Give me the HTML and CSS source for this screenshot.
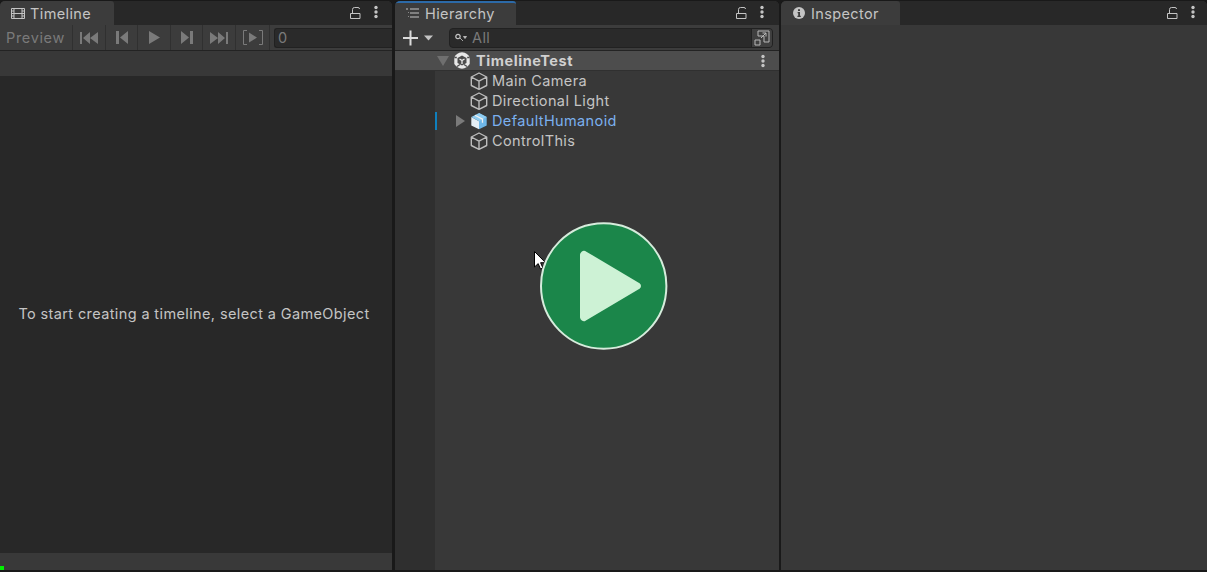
FILE: index.html
```html
<!DOCTYPE html>
<html lang="en">
<head>
<meta charset="utf-8">
<title>Unity Timeline</title>
<link rel="stylesheet" href="styles.css">
</head>
<body>
<svg class="defs" width="0" height="0">
  <defs>
    <symbol id="lock" viewBox="0 0 12 13"><path d="M1.500 7.500h9.500v5H1.500zM3.500 7.500V3.500q0-2 2-2H9q1.500 0 1.500 1.500" fill="none" stroke="#c4c4c4" stroke-width="1"/></symbol>
    <symbol id="dots" viewBox="0 0 4 14"><circle cx="2" cy="2.500" r="1.700" fill="#c4c4c4"/><circle cx="2" cy="7" r="1.700" fill="#c4c4c4"/><circle cx="2" cy="11.500" r="1.700" fill="#c4c4c4"/></symbol>
    <symbol id="cube" viewBox="0 0 18 18"><path d="M9 1 16.700 5v8.500L9 17.300 1.300 13.500V5zM1.300 5 9 9.200 16.700 5M9 9.200v8" fill="none" stroke="#bdbdbd" stroke-width="1.400" stroke-linejoin="round"/></symbol>
  </defs>
</svg>
<main class="workspace">
  <section class="panel timeline">
    <header class="tabbar">
      <div class="tab tab-timeline">
        <svg class="tab-icon" width="14" height="13" viewBox="0 0 14 13"><path d="M.5 1.500h13v10H.5zM3 1.500v10M11 1.500v10M3 6.500h8M.5 4h2.500M.5 6.500h2.500M.5 9h2.500M11 4h2.500M11 6.500h2.500M11 9h2.500" fill="none" stroke="#c4c4c4"/></svg>
        <span>Timeline</span>
      </div>
      <div class="tab-actions">
        <svg class="lock" width="12" height="13"><use href="#lock"/></svg>
        <svg class="dots" width="4" height="14"><use href="#dots"/></svg>
      </div>
    </header>
    <div class="transport">
      <div class="tbtn preview">Preview</div>
      <div class="tbtn t-first"><svg width="18" height="12" viewBox="0 0 18 12"><path d="M0 0h2v12H0zM10 0v12L3 6zM18 0v12l-8-6z"/></svg></div>
      <div class="tbtn t-prev"><svg width="12" height="13" viewBox="0 0 12 13"><path d="M0 0h3v13H0zM12 0v13L4 6.500z"/></svg></div>
      <div class="tbtn t-play"><svg width="11" height="13" viewBox="0 0 11 13"><path d="M0 0l11 6.500L0 13z"/></svg></div>
      <div class="tbtn t-next"><svg width="12" height="13" viewBox="0 0 12 13"><path d="M0 0v13l8-6.500zM9 0h3v13H9z"/></svg></div>
      <div class="tbtn t-last"><svg width="18" height="12" viewBox="0 0 18 12"><path d="M0 0v12l8-6zM8 0v12l7-6zM16 0h2v12h-2z"/></svg></div>
      <div class="tbtn t-loop"><svg width="20" height="15" viewBox="0 0 20 15"><path d="M4 .5H.5v14H4M16 .5h3.500v14H16" fill="none" stroke="#7a7a7a"/><path d="M6 2.500l8 5-8 5z"/></svg></div>
      <div class="frame-field">0</div>
    </div>
    <div class="timeline-ruler"></div>
    <div class="timeline-body"><p>To start creating a timeline, select a GameObject</p></div>
    <div class="timeline-foot"></div>
  </section>

  <section class="panel hierarchy">
    <header class="tabbar">
      <div class="tab tab-hierarchy">
        <svg class="tab-icon" width="13" height="10" viewBox="0 0 13 10"><path d="M0 1h2M4 1h9M4 5h9M4 9h9" stroke="#c4c4c4" fill="none" stroke-width="1.200"/><path d="M2 4.500h1M2 8.500h1" stroke="#888"/></svg>
        <span>Hierarchy</span>
      </div>
      <div class="tab-actions">
        <svg class="lock" width="12" height="13"><use href="#lock"/></svg>
        <svg class="dots" width="4" height="14"><use href="#dots"/></svg>
      </div>
    </header>
    <div class="search-bar">
      <svg class="add" width="30" height="16" viewBox="0 0 30 16"><path d="M7.500 .5v15M0 8h15" stroke="#dcdcdc" stroke-width="2"/><path d="M21 5.500h9L25.500 10.500z" fill="#c4c4c4"/></svg>
      <div class="search-field">
        <svg width="12" height="9" viewBox="0 0 12 9"><circle cx="3" cy="3.500" r="2.200" fill="none" stroke="#c4c4c4" stroke-width="1.200"/><path d="M5 5l3 3M8.500 3.500h3L10 5.500z" stroke="#c4c4c4" fill="#c4c4c4" stroke-width=".8"/></svg>
        <span>All</span>
        <div class="search-pop">
          <svg width="16" height="16" viewBox="0 0 16 16"><path d="M4 1h11v11H10V6H4z" fill="none" stroke="#b8b8b8"/><path d="M1 10h5v5H1zM7 8l5-5M8.500 3H12v3.500" fill="none" stroke="#b8b8b8"/></svg>
        </div>
      </div>
    </div>
    <div class="tree">
      <div class="scene-row">
        <svg class="fold" width="12" height="10" viewBox="0 0 12 10"><path d="M0 0h12L6 10z"/></svg>
        <svg class="unity" width="16" height="17" viewBox="0 0 16 17"><path d="M8 .3Q14 1 15.700 5.500V12Q13 16 8 16.700 3 16 .3 12V5.500Q2 1 8 .3z" fill="#e8e8e8"/><path d="M.3 5.500h2.500M15.700 5.500h-2.500M3 14.500l3-2M13 14.500l-3-2" stroke="#4d4d4d" stroke-width="1.300"/><path d="M3.500 6 8 3.500 12.500 6v5L8 13.500 3.500 11z" fill="#4d4d4d"/><path d="M5.500 7 8 8.500 10.500 7M8 8.500V12" stroke="#e8e8e8" stroke-width="1.300" fill="none"/></svg>
        <span class="scene-name">TimelineTest</span>
        <svg class="dots scene-dots" width="4" height="14"><use href="#dots"/></svg>
      </div>
      <div class="tree-row"><svg class="cube" width="18" height="18"><use href="#cube"/></svg><span>Main Camera</span></div>
      <div class="tree-row"><svg class="cube" width="18" height="18"><use href="#cube"/></svg><span>Directional Light</span></div>
      <div class="tree-row prefab">
        <i class="override-bar"></i>
        <svg class="expand" width="9" height="12" viewBox="0 0 9 12"><path d="M0 0l9 6-9 6z"/></svg>
        <svg class="cube" width="18" height="18" viewBox="0 0 18 18"><path d="M9 1 16.700 5v8.500L9 17.300z" fill="#6fb7e8"/><path d="M1.300 5 9 9.200v8L1.300 13.500z" fill="#e4eef5"/><path d="M1.300 5 9 1 16.700 5 9 9.200z" fill="#8fcdf2"/><path d="M5 3.200l7.500 4v3.500" stroke="#f0f0f0" stroke-width="1.300" fill="none"/></svg>
        <span>DefaultHumanoid</span>
      </div>
      <div class="tree-row"><svg class="cube" width="18" height="18"><use href="#cube"/></svg><span>ControlThis</span></div>
    </div>
  </section>

  <section class="panel inspector">
    <header class="tabbar">
      <div class="tab tab-inspector">
        <svg class="tab-icon" width="12" height="12" viewBox="0 0 12 12"><circle cx="6" cy="6" r="6" fill="#c4c4c4"/><path d="M5 2.200h2v1.800H5zM4.600 5h2.400v3.800h.8V10H4.400V8.800h.8V6.200h-.6z" fill="#3c3c3c"/></svg>
        <span>Inspector</span>
      </div>
      <div class="tab-actions">
        <svg class="lock" width="12" height="13"><use href="#lock"/></svg>
        <svg class="dots" width="4" height="14"><use href="#dots"/></svg>
      </div>
    </header>
    <div class="inspector-body"></div>
  </section>
</main>
<i class="progress"></i>
<svg class="cursor" width="12" height="19" viewBox="0 0 12 19"><path d="M.5.500v15.500l3.700-3.400 2.300 5.400 2.400-1-2.300-5.300h5z" fill="#fff" stroke="#000" stroke-width="1"/></svg>
<svg class="play-overlay" width="128" height="128" viewBox="0 0 128 128">
  <circle cx="63.700" cy="64" r="62.700" fill="#1b864a" stroke="#d6ecdc" stroke-width="2"/>
  <path d="M45 30 99 62a2.500 2.500 0 0 1 0 4L45 98a3 3 0 0 1-4-2.500V33a3 3 0 0 1 4-3z" fill="#cdf2d5" stroke="#cdf2d5" stroke-width="2" stroke-linejoin="round"/>
</svg>
</body>
</html>
```
FILE: styles.css
```css
* { box-sizing: border-box; }
html, body { margin: 0; height: 100%; overflow: hidden; }
body {
  background: #191919;
  font-family: Inter, "Noto Sans", sans-serif;
  font-size: 14.5px;
  letter-spacing: .38px;
  color: #c4c4c4;
  position: relative;
}
.defs { position: absolute; }
.workspace {
  display: flex;
  height: 570px;
  padding-top: 1px;
}
.panel {
  display: flex;
  flex-direction: column;
  background: #383838;
  min-width: 0;
  overflow: hidden;
  border-radius: 5px 5px 0 0;
}
.timeline { width: 392px; margin-right: 3px; }
.hierarchy { width: 384px; margin-right: 2px; }
.inspector { flex: 1; }

.tabbar {
  display: flex;
  justify-content: space-between;
  height: 24px;
  flex: none;
  background: #282828;
}
.tab {
  display: flex;
  align-items: center;
  height: 24px;
  background: #3c3c3c;
  border-radius: 3px 3px 0 0;
}
.tab-timeline { width: 114px; padding-left: 11px; gap: 5px; }
.tab-hierarchy { width: 121px; padding-left: 11px; padding-bottom: 2px; gap: 6px; border-top: 2px solid #2c6aa8; }
.tab-inspector { width: 119px; padding-left: 12px; gap: 6px; }
.tab-actions {
  display: flex;
  align-items: center;
  gap: 13px;
  padding-right: 14px;
  padding-bottom: 2px;
}
.hierarchy .tab-actions { padding-right: 15px; }
.inspector .tab-actions { padding-right: 12px; }

.transport {
  display: flex;
  height: 26px;
  flex: none;
  background: #3c3c3c;
  border-bottom: 1px solid #232323;
}
.tbtn {
  display: flex;
  align-items: center;
  justify-content: center;
  border-right: 1px solid #303030;
  fill: #7a7a7a;
  flex: none;
  color: #7a7a7a;
}
.preview { width: 73px; justify-content: flex-start; padding-left: 6px; letter-spacing: .66px; }
.t-first { width: 33px; }
.t-prev { width: 32px; }
.t-play { width: 33px; }
.t-next { width: 32px; }
.t-last { width: 33px; }
.t-loop { width: 34px; }
.frame-field {
  flex: 1;
  margin: 3px 0 2px 4px;
  padding-left: 3px;
  background: #2a2a2a;
  border: 1px solid #212121;
  border-right: 0;
  border-radius: 3px 0 0 3px;
  color: #7a7a7a;
  line-height: 18px;
}
.timeline-ruler { height: 25px; flex: none; background: #383838; }
.timeline-body {
  flex: 1;
  display: flex;
  align-items: center;
  justify-content: center;
  background: #282828;
}
.timeline-body p { margin: 0 0 2px; padding-right: 4px; }
.timeline-foot { height: 17px; flex: none; background: #393939; }

.search-bar {
  display: flex;
  align-items: center;
  height: 26px;
  flex: none;
  background: #3c3c3c;
  border-bottom: 1px solid #232323;
  padding-left: 8px;
  gap: 16px;
}
.add { flex: none; }
.search-field {
  display: flex;
  align-items: center;
  flex: 1;
  height: 20px;
  margin-right: 6px;
  padding-left: 5px;
  gap: 5px;
  background: #2a2a2a;
  border: 1px solid #212121;
  border-radius: 4px;
  color: #7a7a7a;
}
.search-field span { flex: 1; }
.search-pop {
  display: flex;
  align-items: center;
  justify-content: center;
  width: 21px;
  height: 18px;
  background: #3f3f3f;
  border-left: 1px solid #212121;
  border-radius: 0 3px 3px 0;
}
.tree {
  flex: 1;
  background: linear-gradient(to right, #2f2f2f 40px, #383838 40px);
}
.scene-row {
  display: flex;
  align-items: center;
  height: 19px;
  background: #4d4d4d;
  padding-left: 42px;
  border-bottom: 1px solid #303030;
  position: relative;
  box-sizing: content-box;
}
.fold { fill: #6f6f6f; margin-right: 5px; flex: none; }
.unity { margin-right: 6px; flex: none; }
.scene-name { font-weight: 700; color: #d0d0d0; flex: 1; letter-spacing: .55px; }
.scene-dots { margin-right: 14px; flex: none; }
.tree-row {
  display: flex;
  align-items: center;
  height: 20px;
  padding-left: 75px;
  gap: 4px;
  position: relative;
}
.tree-row span { padding-bottom: 2px; }
.prefab { color: #7bb0ef; }
.override-bar {
  position: absolute;
  left: 40px;
  top: 1px;
  width: 2px;
  height: 18px;
  background: #0f80be;
}
.expand { position: absolute; left: 61px; top: 4px; fill: #7a7a7a; }

.inspector-body { flex: 1; background: #383838; }

.progress {
  position: absolute;
  left: 0;
  top: 566px;
  width: 4px;
  height: 4px;
  background: #00f000;
}
.cursor { position: absolute; left: 534px; top: 251px; }
.play-overlay { position: absolute; left: 540px; top: 222px; }
```
